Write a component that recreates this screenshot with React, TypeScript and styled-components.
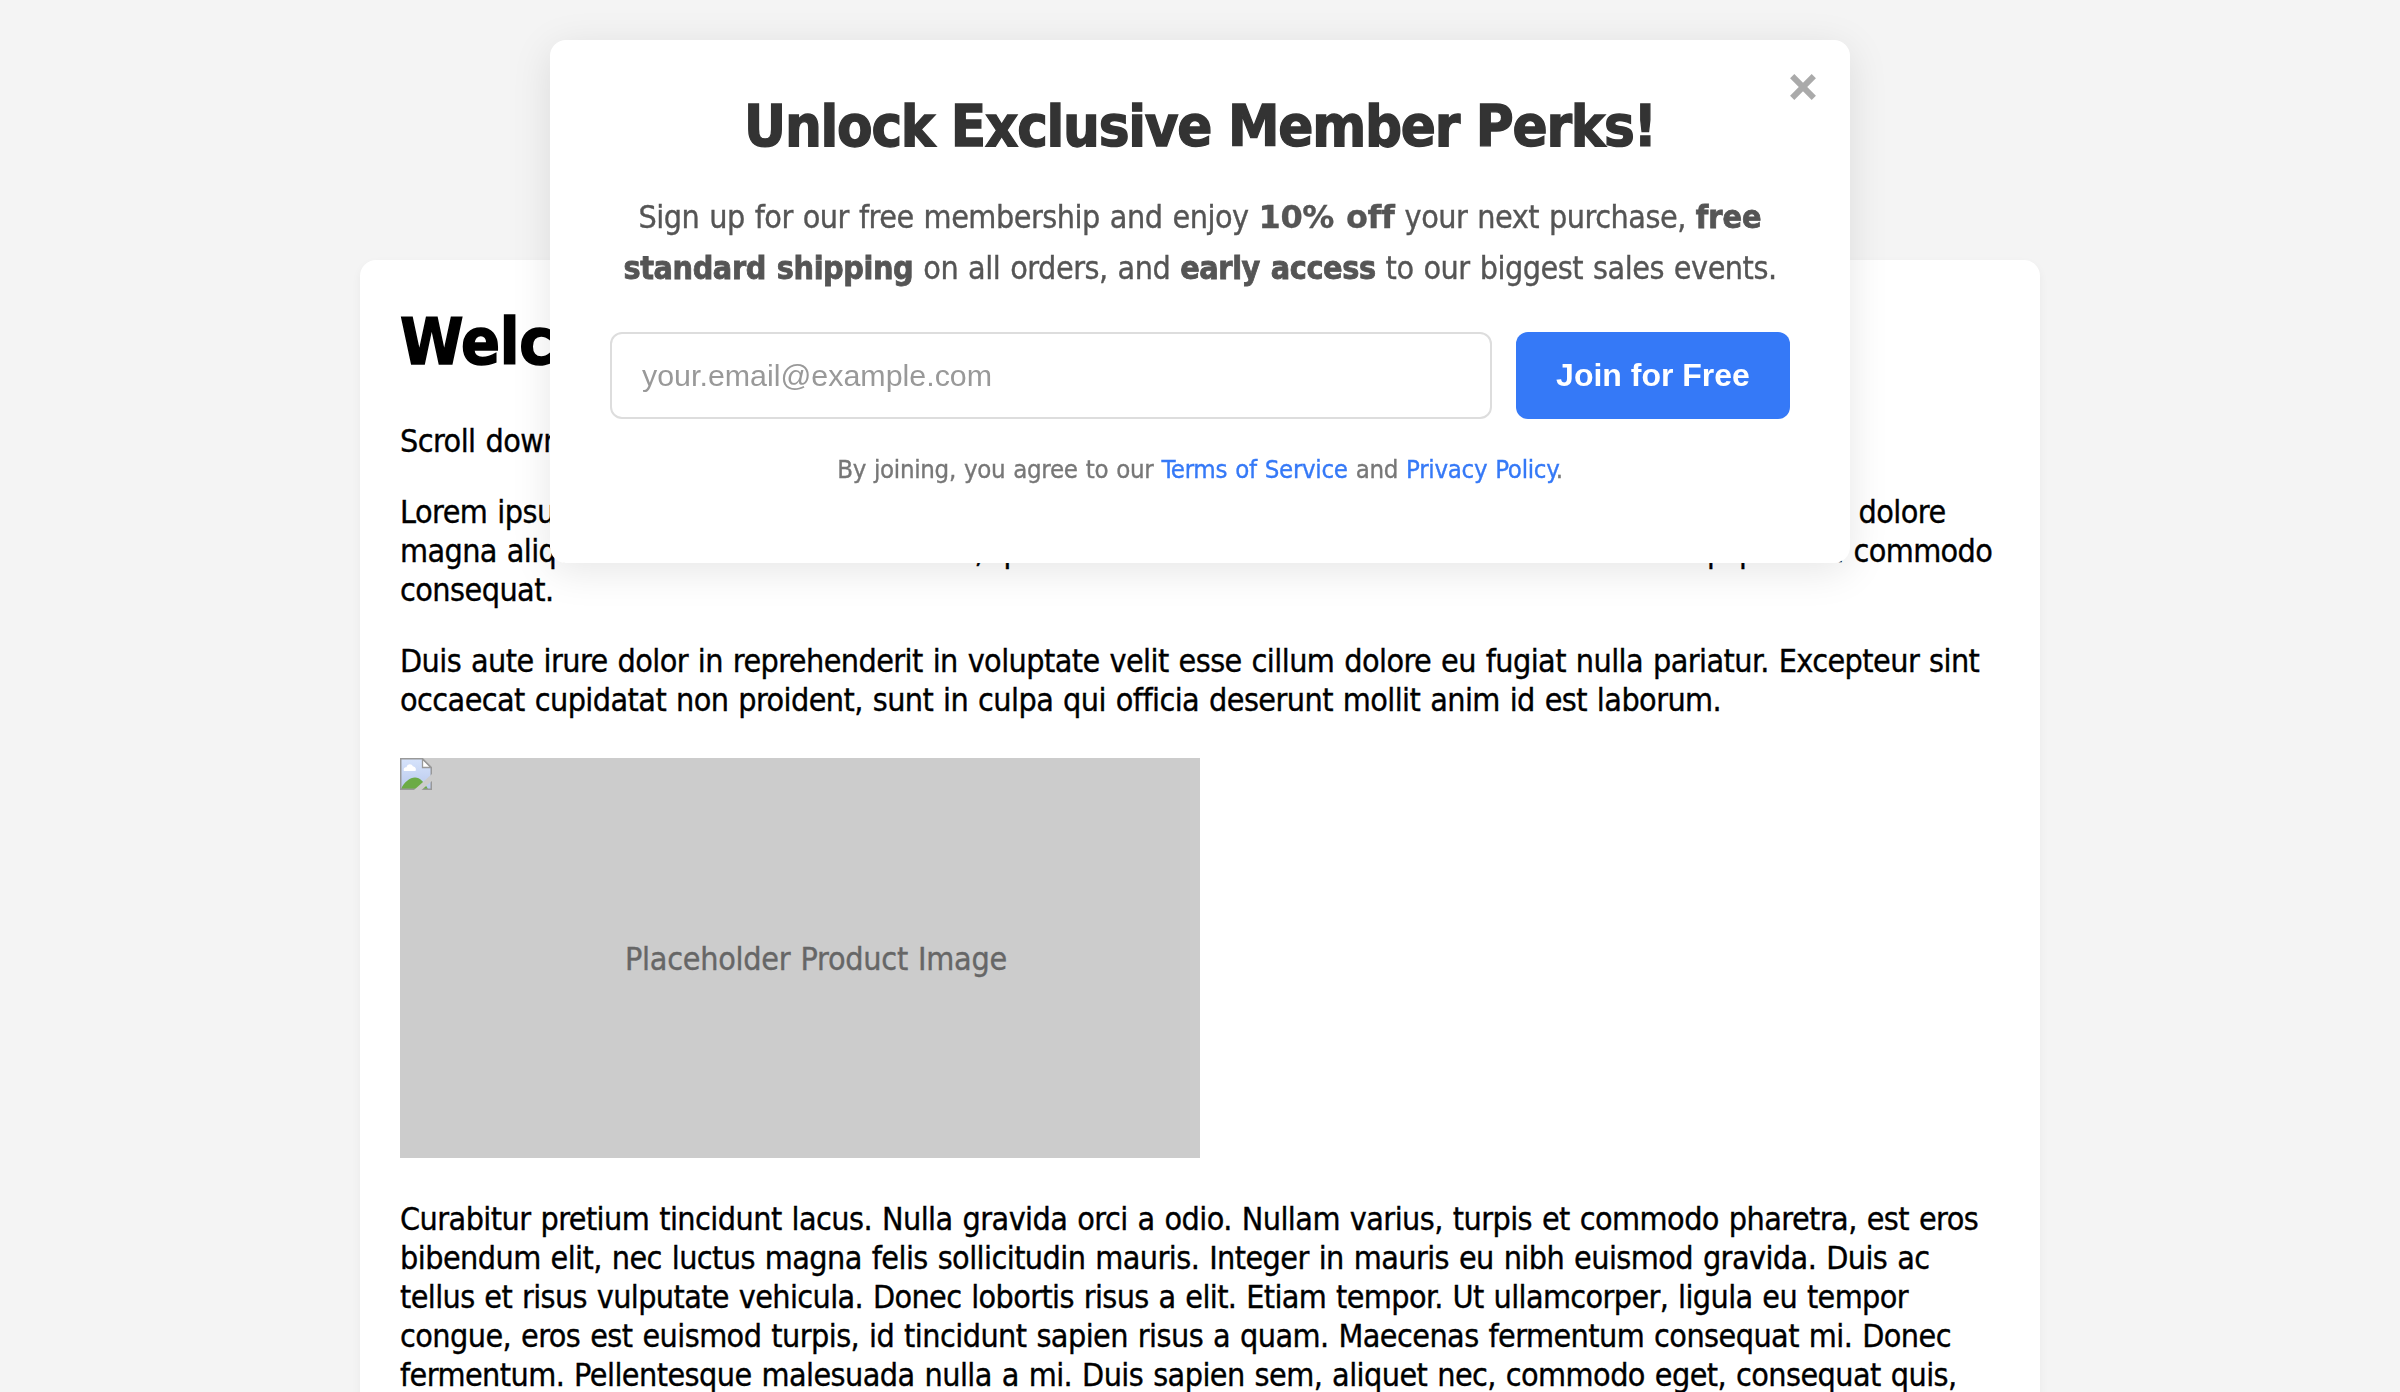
import React from "react";
import styled, { createGlobalStyle } from "styled-components";

const GlobalStyle = createGlobalStyle`
  html, body { margin: 0; padding: 0; background: #f4f4f4; }
  * { box-sizing: border-box; }
`;

const sans = `"DejaVu Sans Condensed", "DejaVu Sans", "Noto Sans", sans-serif`;
const arial = `"Liberation Sans", Arial, sans-serif`;

const Page = styled.div`
  height: 1392px;
  padding-top: 260px;
  overflow: hidden;
  font: 32px/39px ${sans};
  color: #000;
  -webkit-text-stroke-width: 0.35px;
`;

const Card = styled.main`
  width: 1680px;
  height: 1200px;
  margin: 0 auto;
  padding: 44px 40px 40px;
  background: #fff;
  border-radius: 16px;
  box-shadow: 0 4px 10px rgba(0, 0, 0, 0.05);
`;

const Heading = styled.h1`
  margin: 0 0 41px;
  font-size: 64px;
  line-height: 77px;
  letter-spacing: -0.3px;
  -webkit-text-stroke-width: 1.5px;
`;

const Paragraph = styled.p`
  margin: 0 0 32px;
  word-spacing: 1.3px;
`;

const Line = styled.span<{ $tracking: number }>`
  display: block;
  white-space: nowrap;
  letter-spacing: ${(p) => p.$tracking}px;
`;

const ProductImage = styled.figure`
  display: flex;
  width: 800px;
  height: 400px;
  margin: 38px 0 42px;
  background: #ccc;
  color: #666;
`;

const BrokenIcon = styled.svg`
  flex: none;
  width: 32px;
  height: 32px;
`;

const AltText = styled.figcaption`
  flex: 1;
  line-height: 402px;
  text-align: center;
  letter-spacing: -0.26px;
  word-spacing: 1.3px;
`;

const Modal = styled.section`
  position: fixed;
  top: 40px;
  left: 550px;
  width: 1300px;
  height: 523px;
  padding: 52px 60px 0;
  background: #fff;
  border-radius: 16px;
  box-shadow: 0 8px 40px rgba(0, 0, 0, 0.1);
  font: 32px/51px ${sans};
  color: #555;
  text-align: center;
  -webkit-text-stroke-width: 0.35px;
`;

const Title = styled.h2`
  margin: 0 0 30px;
  font-size: 57.6px;
  line-height: 70px;
  letter-spacing: -1.25px;
  color: #333;
  -webkit-text-stroke-width: 1.3px;
`;

const Pitch = styled.p`
  margin: 0 0 38px;
  word-spacing: 1.3px;
`;

const PitchLine = styled.span`
  display: block;
  white-space: pre;
  letter-spacing: -0.49px;
`;

const Strong = styled.strong<{ $tracking: number; $wide?: boolean }>`
  font-family: ${(p) => (p.$wide ? `"DejaVu Sans", sans-serif` : "inherit")};
  line-height: 1;
  letter-spacing: ${(p) => p.$tracking}px;
  -webkit-text-stroke-width: ${(p) => (p.$wide ? 0.3 : 0.8)}px;
`;

const Form = styled.form`
  display: flex;
  gap: 24px;
  height: 87px;
`;

const EmailInput = styled.input`
  flex: 1;
  min-width: 0;
  padding: 0 30px;
  border: 2px solid #ddd;
  border-radius: 12px;
  background: #fff;
  font: 30.4px ${arial};
  outline: none;
  -webkit-text-stroke-width: 0;
  &::placeholder { color: #999; opacity: 1; }
`;

const JoinButton = styled.button`
  width: 274px;
  padding: 0;
  border: 0;
  border-radius: 12px;
  background: #3579f7;
  color: #fff;
  font: bold 32px ${arial};
  -webkit-text-stroke-width: 0;
`;

const FinePrint = styled.p`
  margin: 35px 0 0;
  font-size: 25.6px;
  line-height: 31px;
  letter-spacing: -0.31px;
  word-spacing: 1px;
  color: #777;
`;

const Link = styled.a`
  color: #3579f7;
  text-decoration: none;
`;

const Close = styled.button`
  position: absolute;
  top: 34px;
  right: 34px;
  width: 26px;
  height: 26px;
  padding: 0;
  border: 0;
  background: none;
  svg { display: block; }
`;

export default function App() {
  return (
    <>
      <GlobalStyle />
      <Page>
        <Card>
          <Heading>Welcome</Heading>
          <Paragraph><Line $tracking={-0.55}>Scroll down</Line></Paragraph>
          <Paragraph>
            <Line $tracking={-0.522}>Lorem ipsum dolor sit amet, consectetur adipiscing elit, sed do eiusmod tempor incididunt ut labore et dolore</Line>
            <Line $tracking={-0.6}>magna aliqua. Ut enim ad minim veniam, quis nostrud exercitation ullamco laboris nisi ut aliquip ex ea commodo</Line>
            <Line $tracking={-0.55}>consequat.</Line>
          </Paragraph>
          <Paragraph>
            <Line $tracking={-0.567}>Duis aute irure dolor in reprehenderit in voluptate velit esse cillum dolore eu fugiat nulla pariatur. Excepteur sint</Line>
            <Line $tracking={-0.567}>occaecat cupidatat non proident, sunt in culpa qui officia deserunt mollit anim id est laborum.</Line>
          </Paragraph>
          <ProductImage>
            <BrokenIcon viewBox="0 0 32 32">
              <defs>
                <linearGradient id="sky" x1="0" y1="0" x2="0" y2="1">
                  <stop offset="0" stopColor="#d6e3fb" />
                  <stop offset="1" stopColor="#b9c9ec" />
                </linearGradient>
              </defs>
              <path d="M1 1H22.5L31 9.5V31H1Z" fill="url(#sky)" />
              <path d="M1 31C4 24 10 19.500 15 19.500C20 19.500 24 24 28 31Z" fill="#6cab46" />
              <path d="M4 13C3 10.500 5 9 6.500 9.300C7 6 11.500 5 13 8.500C15.500 8.500 16.500 11 15.500 13Z" fill="#fff" />
              <path d="M22.500 1V9.500H31Z" fill="#fff" stroke="#999" strokeWidth="1.300" />
              <path d="M.75 .75H22.500L31.250 9.500V31.250H.75Z" fill="none" stroke="#999" strokeWidth="1.500" />
              <path d="M32 16V23L21.500 32H14Z" fill="#ccc" />
            </BrokenIcon>
            <AltText>Placeholder Product Image</AltText>
          </ProductImage>
          <Paragraph>
            <Line $tracking={-0.55}>Curabitur pretium tincidunt lacus. Nulla gravida orci a odio. Nullam varius, turpis et commodo pharetra, est eros</Line>
            <Line $tracking={-0.562}>bibendum elit, nec luctus magna felis sollicitudin mauris. Integer in mauris eu nibh euismod gravida. Duis ac</Line>
            <Line $tracking={-0.618}>tellus et risus vulputate vehicula. Donec lobortis risus a elit. Etiam tempor. Ut ullamcorper, ligula eu tempor</Line>
            <Line $tracking={-0.557}>congue, eros est euismod turpis, id tincidunt sapien risus a quam. Maecenas fermentum consequat mi. Donec</Line>
            <Line $tracking={-0.56}>fermentum. Pellentesque malesuada nulla a mi. Duis sapien sem, aliquet nec, commodo eget, consequat quis,</Line>
          </Paragraph>
        </Card>
      </Page>
      <Modal>
        <Close type="button" aria-label="Close">
          <svg width="26" height="26" viewBox="0 0 26 26">
            <path d="M2.200 2.200L23.800 23.800M23.800 2.200L2.200 23.800" stroke="#aaa" strokeWidth="6" />
          </svg>
        </Close>
        <Title>Unlock Exclusive Member Perks!</Title>
        <Pitch>
          <PitchLine>Sign up for our free membership and enjoy <Strong $wide $tracking={-0.4}>10% off</Strong> your next purchase, <Strong $tracking={0}>free</Strong></PitchLine>
          <PitchLine><Strong $tracking={-0.4}>standard shipping</Strong> on all orders, and <Strong $tracking={-0.42}>early access</Strong> to our biggest sales events.</PitchLine>
        </Pitch>
        <Form>
          <EmailInput type="email" placeholder="your.email@example.com" />
          <JoinButton type="button">Join for Free</JoinButton>
        </Form>
        <FinePrint>By joining, you agree to our <Link>Terms of Service</Link> and <Link>Privacy Policy</Link>.</FinePrint>
      </Modal>
    </>
  );
}
